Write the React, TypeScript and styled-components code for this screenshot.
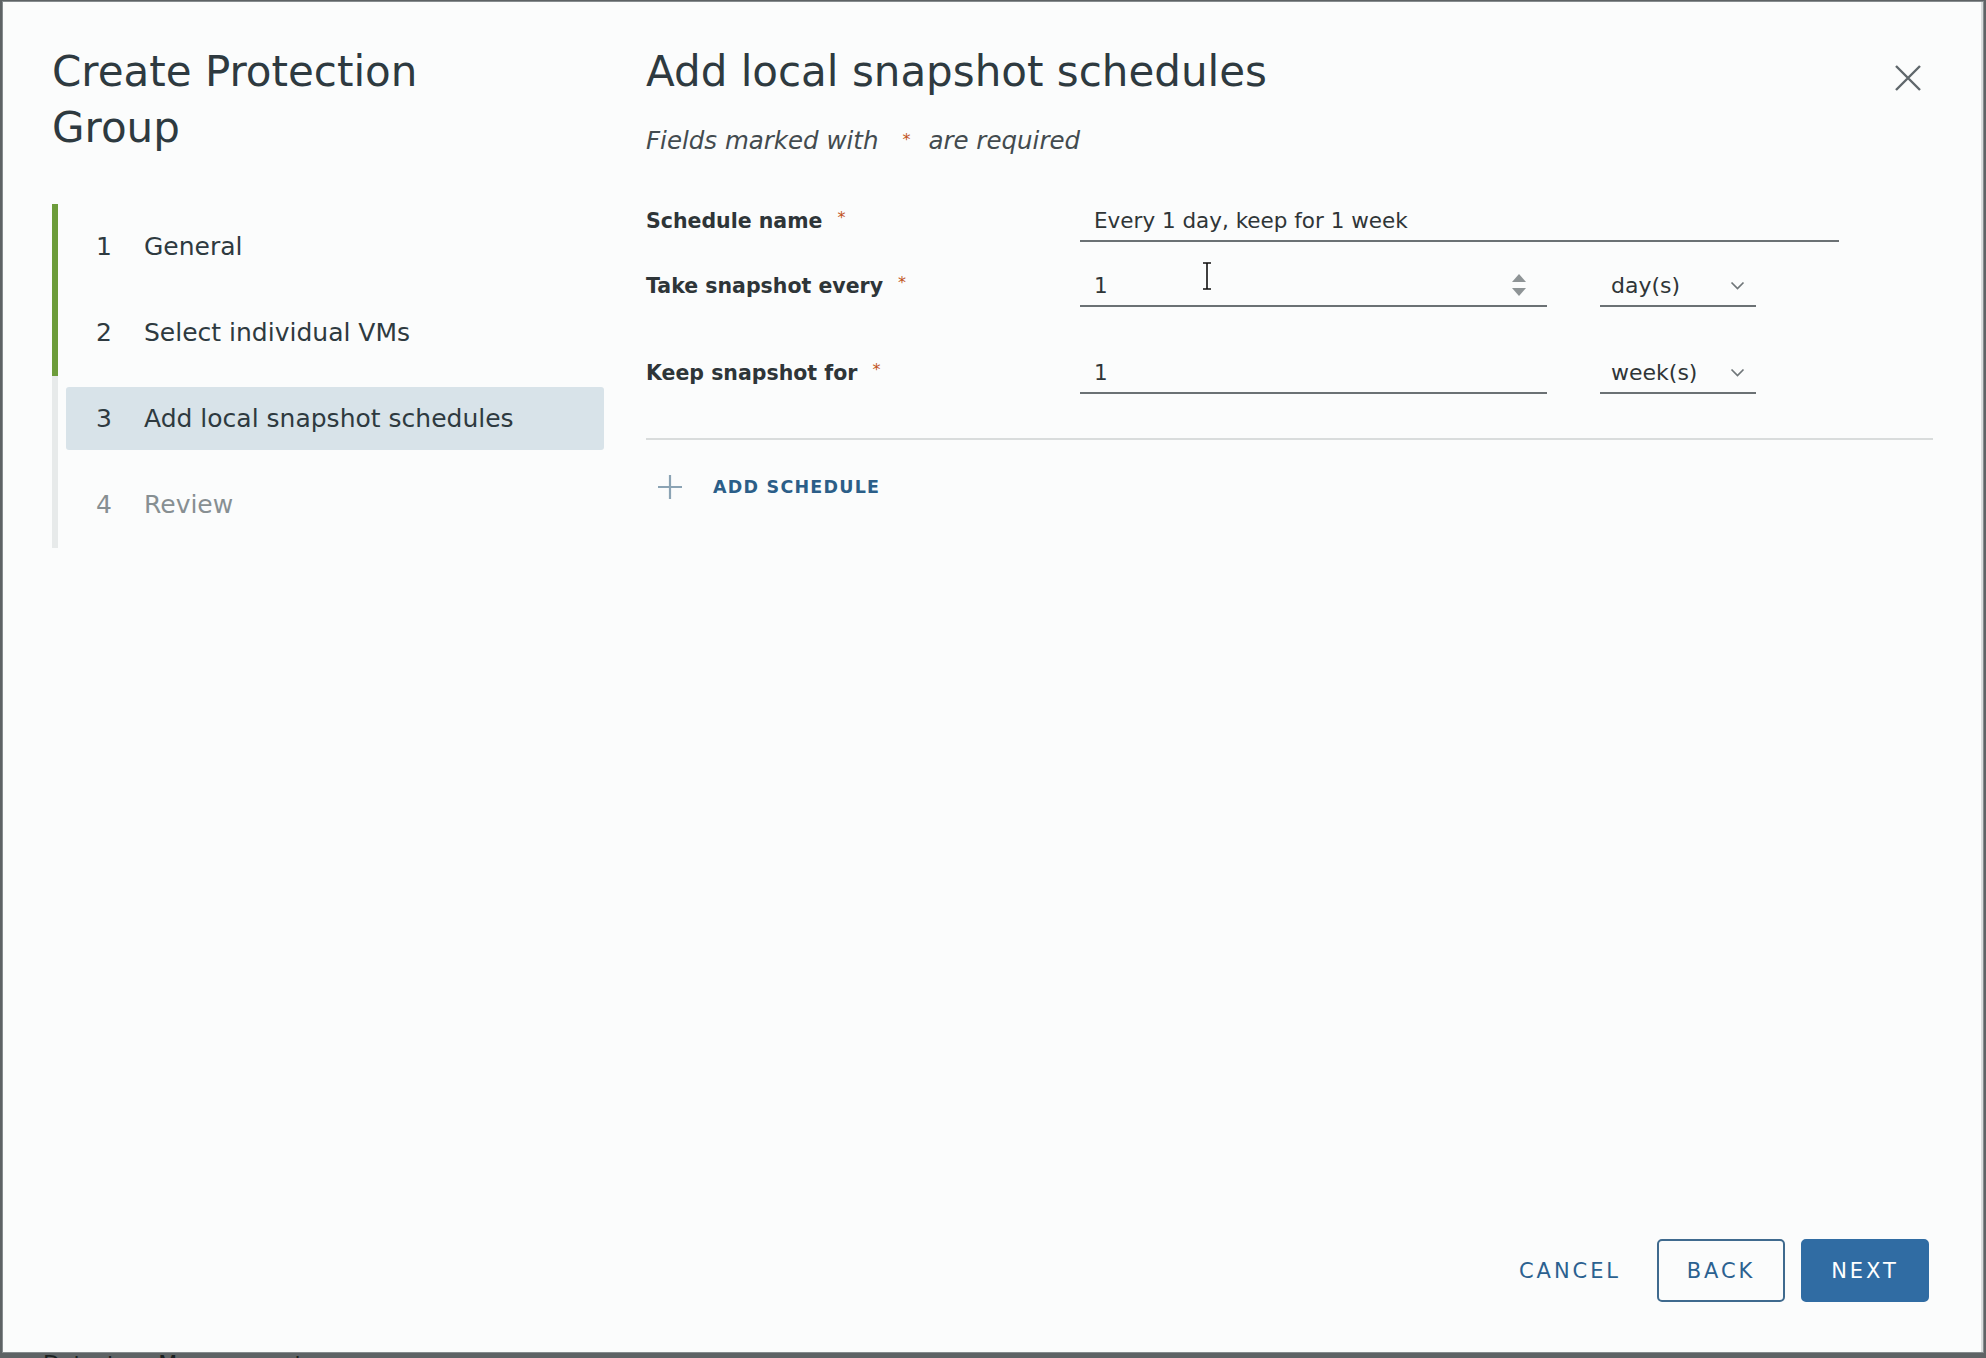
import React from 'react';
import styled, { createGlobalStyle } from 'styled-components';

const steps = [
  { id: 1, title: 'General', state: 'done' },
  { id: 2, title: 'Select individual VMs', state: 'done' },
  { id: 3, title: 'Add local snapshot schedules', state: 'active' },
  { id: 4, title: 'Review', state: 'todo' },
];

const CloseIcon = () => (
  <svg width="26" height="26" viewBox="0 0 26 26">
    <path d="M1 1 L25 25 M25 1 L1 25" stroke="currentColor" strokeWidth="2.4" fill="none" />
  </svg>
);

const SpinnerIcon = () => (
  <svg width="16" height="24" viewBox="0 0 16 24">
    <path d="M8 1 L15 9 L1 9 Z" fill="#8e9496" />
    <path d="M1 15 L15 15 L8 23 Z" fill="#8e9496" />
  </svg>
);

const ChevronIcon = () => (
  <svg width="15" height="9" viewBox="0 0 15 9">
    <path d="M1.5 1.5 L7.5 7.5 L13.5 1.5" stroke="#6f7679" strokeWidth="1.7" fill="none" />
  </svg>
);

const PlusIcon = () => (
  <svg width="24" height="24" viewBox="0 0 24 24">
    <path d="M12 0 V24 M0 12 H24" stroke="#8ba3b4" strokeWidth="2.2" fill="none" />
  </svg>
);

export default function App() {
  return (
    <>
      <GlobalStyle />
      <Screen>
        <Dialog>
          <Body>
            <Sidebar>
              <WizardTitle>Create Protection Group</WizardTitle>
              <StepList>
                {steps.map((s) => (
                  <StepItem key={s.id} $done={s.state === 'done'}>
                    <StepLink $active={s.state === 'active'} $muted={s.state === 'todo'}>
                      <StepNum>{s.id}</StepNum>
                      {s.title}
                    </StepLink>
                  </StepItem>
                ))}
              </StepList>
            </Sidebar>

            <Content>
              <HeaderRow>
                <PageTitle>Add local snapshot schedules</PageTitle>
                <CloseButton aria-label="Close">
                  <CloseIcon />
                </CloseButton>
              </HeaderRow>
              <RequiredNote>
                Fields marked with<NoteMark>*</NoteMark>are required
              </RequiredNote>

              <Form>
                <FormRow $after={23}>
                  <Label>
                    Schedule name<Req>*</Req>
                  </Label>
                  <Controls>
                    <Field $width={759}>
                      <FieldInput defaultValue="Every 1 day, keep for 1 week" />
                    </Field>
                  </Controls>
                </FormRow>

                <FormRow $after={45}>
                  <Label>
                    Take snapshot every<Req>*</Req>
                  </Label>
                  <Controls>
                    <Field $width={467}>
                      <FieldInput defaultValue="1" />
                      <SpinnerIcon />
                      <Cursor width="12" height="30" viewBox="0 0 12 30">
                        <path d="M2 2 H10 M6 2 V28 M2 28 H10" stroke="#fff" strokeWidth="3.5" fill="none" />
                        <path d="M2 2 H10 M6 2 V28 M2 28 H10" stroke="#111" strokeWidth="1.6" fill="none" />
                      </Cursor>
                    </Field>
                    <SelectBox>
                      day(s)
                      <ChevronIcon />
                    </SelectBox>
                  </Controls>
                </FormRow>

                <FormRow $after={0}>
                  <Label>
                    Keep snapshot for<Req>*</Req>
                  </Label>
                  <Controls>
                    <Field $width={467}>
                      <FieldInput defaultValue="1" />
                    </Field>
                    <SelectBox>
                      week(s)
                      <ChevronIcon />
                    </SelectBox>
                  </Controls>
                </FormRow>
              </Form>

              <Divider />

              <AddButton>
                <PlusIcon />
                ADD SCHEDULE
              </AddButton>
            </Content>
          </Body>

          <Footer>
            <Button $variant="flat">CANCEL</Button>
            <Button $variant="outline">BACK</Button>
            <Button $variant="solid">NEXT</Button>
          </Footer>
        </Dialog>
        <BehindStrip>
          <BehindText>Datastore Management</BehindText>
        </BehindStrip>
      </Screen>
    </>
  );
}

// --- Styled Components ---

const GlobalStyle = createGlobalStyle`
  html, body {
    margin: 0;
    padding: 0;
    background: #5e6365;
  }
  body {
    font-family: "DejaVu Sans", "Liberation Sans", sans-serif;
  }
  * {
    box-sizing: border-box;
  }
`;

const Screen = styled.div`
  height: 1358px;
  overflow: hidden;
  padding: 2px 3px 0 3px;
  display: flex;
  flex-direction: column;
`;

const Dialog = styled.div`
  height: 1350px;
  flex-shrink: 0;
  background: #fbfcfc;
  border-right: 2px solid #d9dddd;
  box-shadow: 0 0 0 1px #868c8e;
  display: flex;
  flex-direction: column;
`;

const Body = styled.div`
  flex: 1;
  display: flex;
  padding-top: 42px;
`;

const Sidebar = styled.aside`
  width: 601px;
  flex-shrink: 0;
  padding-left: 49px;
`;

const WizardTitle = styled.h1`
  margin: 0;
  max-width: 440px;
  font-size: 42px;
  line-height: 56px;
  font-weight: 400;
  color: #2e3a40;
`;

const StepList = styled.ol`
  list-style: none;
  margin: 48px 0 0;
  padding: 0;
`;

const StepItem = styled.li<{ $done: boolean }>`
  border-left: 6px solid ${(p) => (p.$done ? '#6c9c3a' : '#e7eaea')};
  padding: 11px 0 12px 8px;
`;

const StepLink = styled.div<{ $active: boolean; $muted: boolean }>`
  display: flex;
  align-items: center;
  height: 63px;
  padding-left: 30px;
  border-radius: 3px;
  background: ${(p) => (p.$active ? '#d8e3e9' : 'transparent')};
  color: ${(p) => (p.$muted ? '#878f92' : '#2e3a40')};
  font-size: 25px;
`;

const StepNum = styled.span`
  width: 48px;
  flex-shrink: 0;
`;

const Content = styled.main`
  flex: 1;
  padding: 0 48px 0 42px;
`;

const HeaderRow = styled.div`
  display: flex;
  justify-content: space-between;
  align-items: flex-start;
`;

const PageTitle = styled.h2`
  margin: 0;
  font-size: 42px;
  line-height: 56px;
  font-weight: 400;
  color: #2e3a40;
`;

const CloseButton = styled.button`
  width: 40px;
  height: 40px;
  margin: 14px 5px 0 0;
  padding: 0;
  border: none;
  background: none;
  color: #5f676b;
  display: flex;
  align-items: center;
  justify-content: center;
  cursor: pointer;
`;

const RequiredNote = styled.p`
  margin: 25px 0 0;
  font-size: 24.5px;
  line-height: 32px;
  font-style: italic;
  color: #434b4f;
`;

const NoteMark = styled.span`
  display: inline-block;
  margin: 0 18px 0 24px;
  font-size: 16px;
  font-style: normal;
  color: #c2541d;
  position: relative;
  top: -4px;
`;

const Form = styled.div`
  margin-top: 40px;
`;

const FormRow = styled.div<{ $after: number }>`
  display: grid;
  grid-template-columns: 434px 1fr;
  align-items: center;
  margin-bottom: ${(p) => p.$after}px;
`;

const Label = styled.label`
  display: flex;
  align-items: center;
  font-size: 20.5px;
  font-weight: 700;
  color: #2e3538;
`;

const Req = styled.span`
  margin-left: 15px;
  font-size: 16px;
  font-weight: 400;
  color: #c2541d;
  position: relative;
  top: -4px;
`;

const Controls = styled.div`
  display: flex;
  gap: 53px;
`;

const Field = styled.div<{ $width: number }>`
  position: relative;
  width: ${(p) => p.$width}px;
  height: 42px;
  border-bottom: 2px solid #6b7174;
  display: flex;
  align-items: center;
  padding: 0 20px 0 14px;
`;

const FieldInput = styled.input`
  flex: 1;
  min-width: 0;
  height: 100%;
  padding: 0;
  border: none;
  outline: none;
  background: transparent;
  font-family: inherit;
  font-size: 21.5px;
  color: #2f3537;
`;

const Cursor = styled.svg`
  position: absolute;
  left: 121px;
  top: -4px;
`;

const SelectBox = styled.div`
  width: 156px;
  height: 42px;
  border-bottom: 2px solid #6b7174;
  display: flex;
  align-items: center;
  justify-content: space-between;
  padding: 0 11px 0 11px;
  font-size: 22px;
  color: #2f3537;
`;

const Divider = styled.hr`
  margin: 44px 0 0;
  height: 2px;
  border: none;
  background: #d9dcdc;
`;

const AddButton = styled.button`
  margin-top: 27px;
  height: 40px;
  display: flex;
  align-items: center;
  gap: 31px;
  padding: 0 0 0 12px;
  border: none;
  background: none;
  font-family: inherit;
  font-size: 17.5px;
  font-weight: 700;
  letter-spacing: 0.07em;
  color: #2b5e88;
  cursor: pointer;
`;

const Footer = styled.footer`
  display: flex;
  justify-content: flex-end;
  gap: 16px;
  padding: 0 52px 50px 0;
`;

const Button = styled.button<{ $variant: 'flat' | 'outline' | 'solid' }>`
  min-width: 128px;
  height: 63px;
  padding: 0 ${(p) => (p.$variant === 'flat' ? 18 : 24)}px;
  border-radius: 5px;
  font-family: inherit;
  font-size: 21px;
  letter-spacing: 0.14em;
  cursor: pointer;
  border: 2px solid ${(p) => (p.$variant === 'flat' ? 'transparent' : p.$variant === 'outline' ? '#3f6a8e' : '#306ca3')};
  background: ${(p) => (p.$variant === 'solid' ? '#306ca3' : 'transparent')};
  color: ${(p) => (p.$variant === 'solid' ? '#ffffff' : '#2b6190')};
`;

const BehindStrip = styled.div`
  height: 6px;
  overflow: hidden;
  padding-left: 40px;
`;

const BehindText = styled.div`
  margin-top: -1px;
  font-size: 22px;
  line-height: 26px;
  color: #1b1f20;
`;
